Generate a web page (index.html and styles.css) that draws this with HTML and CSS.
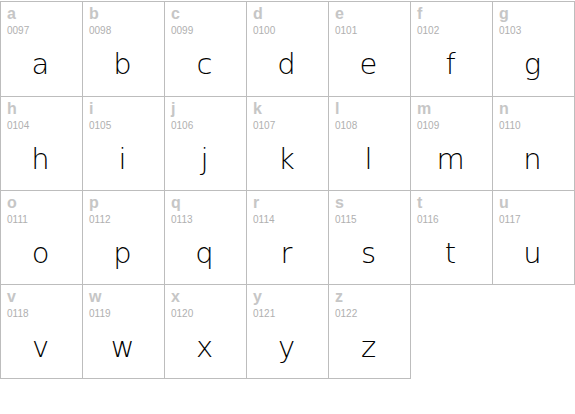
FILE: index.html
```html
<!DOCTYPE html>
<html>
<head>
<meta charset="utf-8">
<link rel="stylesheet" href="styles.css">
</head>
<body>
<div class="grid">
  <div class="cell"><div class="name">a</div><div class="code">0097</div><div class="glyph">a</div></div>
  <div class="cell"><div class="name">b</div><div class="code">0098</div><div class="glyph">b</div></div>
  <div class="cell"><div class="name">c</div><div class="code">0099</div><div class="glyph">c</div></div>
  <div class="cell"><div class="name">d</div><div class="code">0100</div><div class="glyph">d</div></div>
  <div class="cell"><div class="name">e</div><div class="code">0101</div><div class="glyph">e</div></div>
  <div class="cell"><div class="name">f</div><div class="code">0102</div><div class="glyph">f</div></div>
  <div class="cell"><div class="name">g</div><div class="code">0103</div><div class="glyph">g</div></div>
  <div class="cell"><div class="name">h</div><div class="code">0104</div><div class="glyph">h</div></div>
  <div class="cell"><div class="name">i</div><div class="code">0105</div><div class="glyph">i</div></div>
  <div class="cell"><div class="name">j</div><div class="code">0106</div><div class="glyph">j</div></div>
  <div class="cell"><div class="name">k</div><div class="code">0107</div><div class="glyph">k</div></div>
  <div class="cell"><div class="name">l</div><div class="code">0108</div><div class="glyph">l</div></div>
  <div class="cell"><div class="name">m</div><div class="code">0109</div><div class="glyph">m</div></div>
  <div class="cell"><div class="name">n</div><div class="code">0110</div><div class="glyph">n</div></div>
  <div class="cell"><div class="name">o</div><div class="code">0111</div><div class="glyph">o</div></div>
  <div class="cell"><div class="name">p</div><div class="code">0112</div><div class="glyph">p</div></div>
  <div class="cell"><div class="name">q</div><div class="code">0113</div><div class="glyph">q</div></div>
  <div class="cell"><div class="name">r</div><div class="code">0114</div><div class="glyph">r</div></div>
  <div class="cell"><div class="name">s</div><div class="code">0115</div><div class="glyph">s</div></div>
  <div class="cell"><div class="name">t</div><div class="code">0116</div><div class="glyph">t</div></div>
  <div class="cell"><div class="name">u</div><div class="code">0117</div><div class="glyph">u</div></div>
  <div class="cell"><div class="name">v</div><div class="code">0118</div><div class="glyph">v</div></div>
  <div class="cell"><div class="name">w</div><div class="code">0119</div><div class="glyph">w</div></div>
  <div class="cell"><div class="name">x</div><div class="code">0120</div><div class="glyph">x</div></div>
  <div class="cell"><div class="name">y</div><div class="code">0121</div><div class="glyph">y</div></div>
  <div class="cell"><div class="name">z</div><div class="code">0122</div><div class="glyph">z</div></div>
</div>
</body>
</html>
```
FILE: styles.css
```css
html, body {
  margin: 0;
  padding: 0;
  background: #fff;
}
body {
  padding-top: 1px;
}
.grid {
  display: grid;
  grid-template-columns: repeat(7, 82px);
  grid-template-rows: 95px 94px 94px 94px;
  width: max-content;
  border-left: 1px solid #bdbdbd;
  border-top: 1px solid #bdbdbd;
}
.cell {
  border-right: 1px solid #bdbdbd;
  border-bottom: 1px solid #bdbdbd;
  padding-top: 3px;
  overflow: hidden;
}
.name {
  font-family: "Liberation Sans", Arial, sans-serif;
  font-weight: bold;
  font-size: 16px;
  line-height: 18px;
  color: #c6c6c6;
  padding-left: 6px;
}
.code {
  font-family: "Liberation Sans", Arial, sans-serif;
  font-size: 10px;
  line-height: 12px;
  color: #b0b0b0;
  padding-left: 6px;
  margin-top: 2px;
}
.glyph {
  font-family: "DejaVu Sans", sans-serif;
  font-weight: 200;
  font-size: 29px;
  line-height: 40px;
  color: #000;
  text-align: center;
  padding-right: 2px;
  margin-top: 7px;
}
```
